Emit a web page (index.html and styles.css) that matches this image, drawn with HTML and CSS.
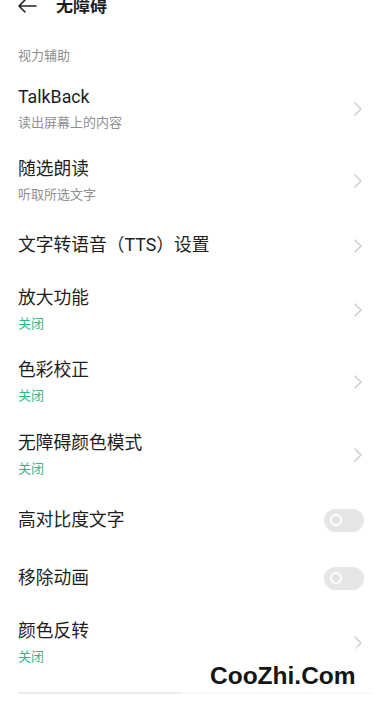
FILE: index.html
```html
<!DOCTYPE html>
<html lang="zh-CN">
<head>
<meta charset="utf-8">
<title>无障碍</title>
<link rel="stylesheet" href="styles.css">
</head>
<body>
<div class="page">
  <header class="header">
    <svg class="back" width="20" height="14" viewBox="0 0 20 14"><path d="M19 7H2M8 1L2 7l6 6" fill="none" stroke="#222" stroke-width="1.6" stroke-linecap="round" stroke-linejoin="round"/></svg>
    <span class="htitle">无障碍</span>
  </header>
  <div class="section">视力辅助</div>
  <div class="list">
    <div class="row two">
      <div class="texts"><div class="title">TalkBack</div><div class="sub">读出屏幕上的内容</div></div>
      <svg class="chev" width="8" height="14" viewBox="0 0 8 14"><path d="M1 1l6 6-6 6" fill="none" stroke="#cfcfcf" stroke-width="1.5" stroke-linecap="round" stroke-linejoin="round"/></svg>
    </div>
    <div class="row two">
      <div class="texts"><div class="title">随选朗读</div><div class="sub">听取所选文字</div></div>
      <svg class="chev" width="8" height="14" viewBox="0 0 8 14"><path d="M1 1l6 6-6 6" fill="none" stroke="#cfcfcf" stroke-width="1.5" stroke-linecap="round" stroke-linejoin="round"/></svg>
    </div>
    <div class="row one">
      <div class="texts"><div class="title">文字转语音（TTS）设置</div></div>
      <svg class="chev" width="8" height="14" viewBox="0 0 8 14"><path d="M1 1l6 6-6 6" fill="none" stroke="#cfcfcf" stroke-width="1.5" stroke-linecap="round" stroke-linejoin="round"/></svg>
    </div>
    <div class="row two">
      <div class="texts"><div class="title">放大功能</div><div class="sub green">关闭</div></div>
      <svg class="chev" width="8" height="14" viewBox="0 0 8 14"><path d="M1 1l6 6-6 6" fill="none" stroke="#cfcfcf" stroke-width="1.5" stroke-linecap="round" stroke-linejoin="round"/></svg>
    </div>
    <div class="row two">
      <div class="texts"><div class="title">色彩校正</div><div class="sub green">关闭</div></div>
      <svg class="chev" width="8" height="14" viewBox="0 0 8 14"><path d="M1 1l6 6-6 6" fill="none" stroke="#cfcfcf" stroke-width="1.5" stroke-linecap="round" stroke-linejoin="round"/></svg>
    </div>
    <div class="row two">
      <div class="texts"><div class="title">无障碍颜色模式</div><div class="sub green">关闭</div></div>
      <svg class="chev" width="8" height="14" viewBox="0 0 8 14"><path d="M1 1l6 6-6 6" fill="none" stroke="#cfcfcf" stroke-width="1.5" stroke-linecap="round" stroke-linejoin="round"/></svg>
    </div>
    <div class="row sw">
      <div class="texts"><div class="title">高对比度文字</div></div>
      <div class="toggle"><span class="knob"></span></div>
    </div>
    <div class="row sw">
      <div class="texts"><div class="title">移除动画</div></div>
      <div class="toggle"><span class="knob"></span></div>
    </div>
    <div class="row two">
      <div class="texts"><div class="title">颜色反转</div><div class="sub green">关闭</div></div>
      <svg class="chev" width="8" height="14" viewBox="0 0 8 14"><path d="M1 1l6 6-6 6" fill="none" stroke="#cfcfcf" stroke-width="1.5" stroke-linecap="round" stroke-linejoin="round"/></svg>
    </div>
  </div>
  <div class="divider"></div>
  <div class="watermark">CooZhi.Com</div>
</div>
</body>
</html>
```
FILE: styles.css
```css
html, body {
  margin: 0;
  padding: 0;
  background: #fff;
}
body {
  font-family: Roboto, "Noto Sans CJK SC", sans-serif;
  color: #1e1e1e;
  width: 390px;
  height: 705px;
  overflow: hidden;
}
.page {
  position: relative;
  height: 705px;
}
.header {
  display: flex;
  align-items: center;
  height: 28px;
  margin-top: -8px;
  padding-left: 17px;
}
.back {
  display: block;
}
.htitle {
  margin-left: 19px;
  font-size: 17px;
  font-weight: 700;
  line-height: 28px;
  color: #1e1e1e;
}
.section {
  padding: 26px 18px 6.5px;
  font-size: 13px;
  line-height: 20px;
  color: #8c8c8c;
}
.row {
  display: flex;
  align-items: center;
  justify-content: space-between;
  padding: 0 28px 0 18px;
}
.row.two {
  padding-top: 12px;
  padding-bottom: 12.5px;
}
.row.one {
  height: 56px;
}
.row.sw {
  height: 58px;
  padding-right: 26px;
}
.title {
  font-size: 17.75px;
  line-height: 25px;
  color: #1e1e1e;
}
.sub {
  margin-top: 2px;
  font-size: 13px;
  line-height: 21px;
  color: #8f8f8f;
}
.sub.green {
  color: #36b585;
}
.chev {
  display: block;
  flex: none;
}
.toggle {
  width: 40px;
  height: 23px;
  border-radius: 12px;
  background: #e6e6e6;
  display: flex;
  align-items: center;
  padding-left: 6px;
  box-sizing: border-box;
}
.knob {
  width: 8px;
  height: 8px;
  border-radius: 50%;
  border: 2.5px solid #fff;
  background: #e2e2e2;
}
.divider {
  margin: 12px 18px 0;
  height: 2px;
  background: #ececec;
}
.watermark {
  position: absolute;
  left: 182px;
  top: 655px;
  width: 208px;
  height: 50px;
  box-sizing: border-box;
  padding: 15px 0 0 28px;
  background: rgba(255, 255, 255, 0.65);
  font-family: "Liberation Sans", Arial, sans-serif;
  font-weight: 700;
  font-size: 24.5px;
  line-height: 28px;
  color: #151515;
}
```
